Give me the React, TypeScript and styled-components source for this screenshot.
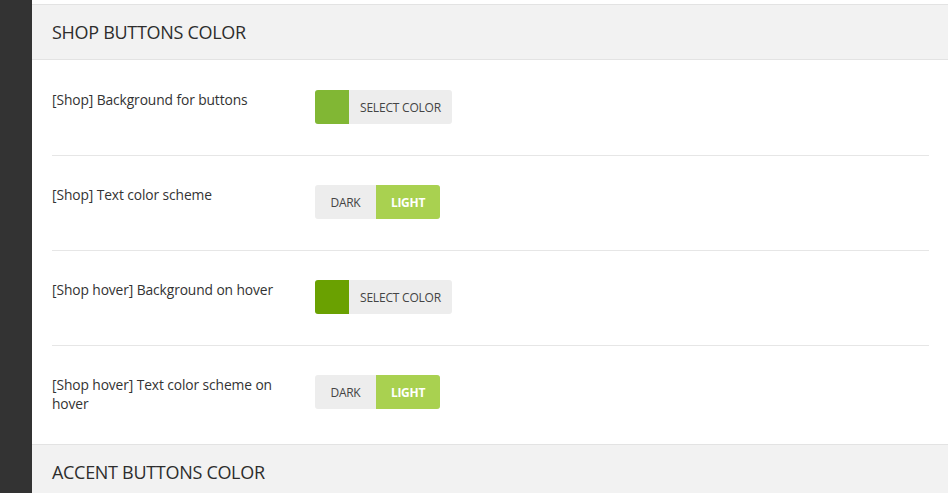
import React from 'react'
import styled, { createGlobalStyle } from 'styled-components'

const GlobalStyle = createGlobalStyle`
  html, body {
    margin: 0;
    padding: 0;
    background: #fff;
    overflow: hidden;
  }
  body {
    font-family: "Open Sans", "Noto Sans", "Liberation Sans", sans-serif;
    color: #333;
  }
`

const Page = styled.div`
  display: flex;
  width: 948px;
  height: 493px;
  overflow: hidden;
`

const Sidebar = styled.div`
  width: 32px;
  flex-shrink: 0;
  background: #333333;
`

const Panel = styled.div`
  flex: 1;
  padding-top: 4px;
  background: #fff;
`

const SectionHeader = styled.div`
  display: flex;
  align-items: center;
  height: 54px;
  padding: 0 20px;
  background: #f2f2f2;
  border-top: 1px solid #e3e3e3;
  border-bottom: 1px solid #e3e3e3;
  font-size: 18px;
  letter-spacing: -0.3px;
  color: #2d2d2d;
`

const Body = styled.div`
  padding: 0 19px 0 20px;
`

const Row = styled.div`
  display: flex;
  align-items: flex-start;
  padding: 30px 0 31px;
  & + & {
    border-top: 1px solid #e6e6e6;
    padding-top: 29px;
  }
`

const Label = styled.div`
  width: 240px;
  margin-right: 23px;
  font-size: 13.8px;
  line-height: 19px;
  letter-spacing: -0.1px;
  color: #333;
`

const ColorButton = styled.div`
  display: flex;
  align-items: center;
  height: 34px;
  border-radius: 3px;
  background: #ededed;
  overflow: hidden;
`

const Swatch = styled.div<{ color: string }>`
  width: 34px;
  height: 34px;
  background: ${p => p.color};
`

const ButtonText = styled.span`
  padding: 0 11px;
  font-size: 12px;
  color: #444;
  letter-spacing: -0.2px;
`

const Toggle = styled.div`
  display: flex;
  height: 34px;
  border-radius: 3px;
  background: #ededed;
  overflow: hidden;
`

const ToggleOption = styled.div<{ active?: boolean }>`
  display: flex;
  align-items: center;
  justify-content: center;
  width: ${p => (p.active ? '64px' : '61px')};
  font-size: 12px;
  font-weight: ${p => (p.active ? 700 : 400)};
  letter-spacing: -0.3px;
  color: ${p => (p.active ? '#fff' : '#444')};
  background: ${p => (p.active ? '#a9d150' : 'transparent')};
`

const ColorControl = ({ color }: { color: string }) => (
  <ColorButton>
    <Swatch color={color} />
    <ButtonText>SELECT COLOR</ButtonText>
  </ColorButton>
)

const SchemeControl = ({ value }: { value: 'dark' | 'light' }) => (
  <Toggle>
    <ToggleOption active={value === 'dark'}>DARK</ToggleOption>
    <ToggleOption active={value === 'light'}>LIGHT</ToggleOption>
  </Toggle>
)

export default function App() {
  return (
    <>
      <GlobalStyle />
      <Page>
        <Sidebar />
        <Panel>
          <SectionHeader>SHOP BUTTONS COLOR</SectionHeader>
          <Body>
            <Row>
              <Label>[Shop] Background for buttons</Label>
              <ColorControl color="#81b734" />
            </Row>
            <Row>
              <Label>[Shop] Text color scheme</Label>
              <SchemeControl value="light" />
            </Row>
            <Row>
              <Label>[Shop hover] Background on hover</Label>
              <ColorControl color="#6aa101" />
            </Row>
            <Row>
              <Label>[Shop hover] Text color scheme on hover</Label>
              <SchemeControl value="light" />
            </Row>
          </Body>
          <SectionHeader>ACCENT BUTTONS COLOR</SectionHeader>
        </Panel>
      </Page>
    </>
  )
}
